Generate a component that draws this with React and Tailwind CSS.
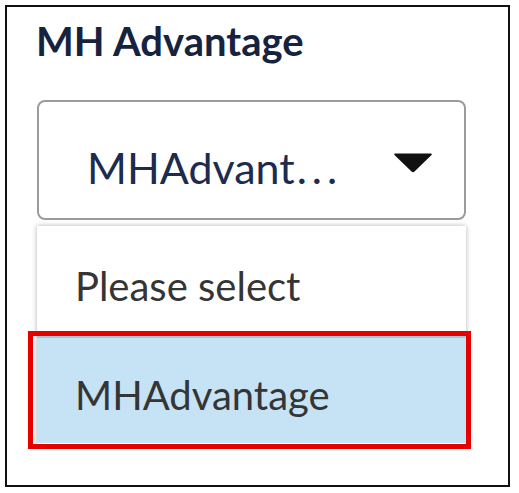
import React from "react";

const Caret = () => (
  <svg width="40" height="21" viewBox="0 0 40 21" className="block">
    <path d="M2 1.5 H38 Q39.5 1.5 38.5 3 L21.5 19.5 Q20 21 18.5 19.5 L1.5 3 Q0.5 1.5 2 1.5 Z" fill="#111" />
  </svg>
);

const App = () => {
  return (
    <div className="w-[519px] h-[493px] bg-white pt-[5px] pl-[5px] font-['Lato',sans-serif]">
      <div className="w-[505px] h-[482px] border-2 border-[#111]">
        <h1 className="mt-[14px] pl-[29px] text-[40px] leading-none font-bold text-[#16233f]">
          MH Advantage
        </h1>

        {/* select box */}
        <div className="mt-[39px] ml-[30px] w-[429px] h-[120px] border-2 border-[#9b9b9b] rounded-[8px] bg-white flex items-start">
          <span className="mt-[44px] ml-[48px] whitespace-nowrap text-[43px] leading-none text-[#1d2b4f]">
            MHAdvant<span className="ml-[2px] tracking-[5px]">...</span>
          </span>
          <span className="ml-auto mr-[31px] mt-[50px]">
            <Caret />
          </span>
        </div>

        {/* options list */}
        <div className="mt-[6px] ml-[30px] w-[429px] bg-white pb-[3px] shadow-[0_0_5px_rgba(0,0,0,0.3)]">
          <div className="h-[110px] pt-[40px] pl-[38px] text-[40px] leading-none text-[#353535]">
            Please select
          </div>
          <div className="relative h-[107px] border-t-2 border-[#a9c2d6] bg-[#c6e2f5] pt-[37px] pl-[38px] text-[40px] leading-none text-[#353535]">
            MHAdvantage
            <div className="absolute -top-[7px] -left-[9px] -right-[5px] -bottom-[6px] border-[5px] border-[#e60000]" />
          </div>
        </div>
      </div>
    </div>
  );
};

export default App;
